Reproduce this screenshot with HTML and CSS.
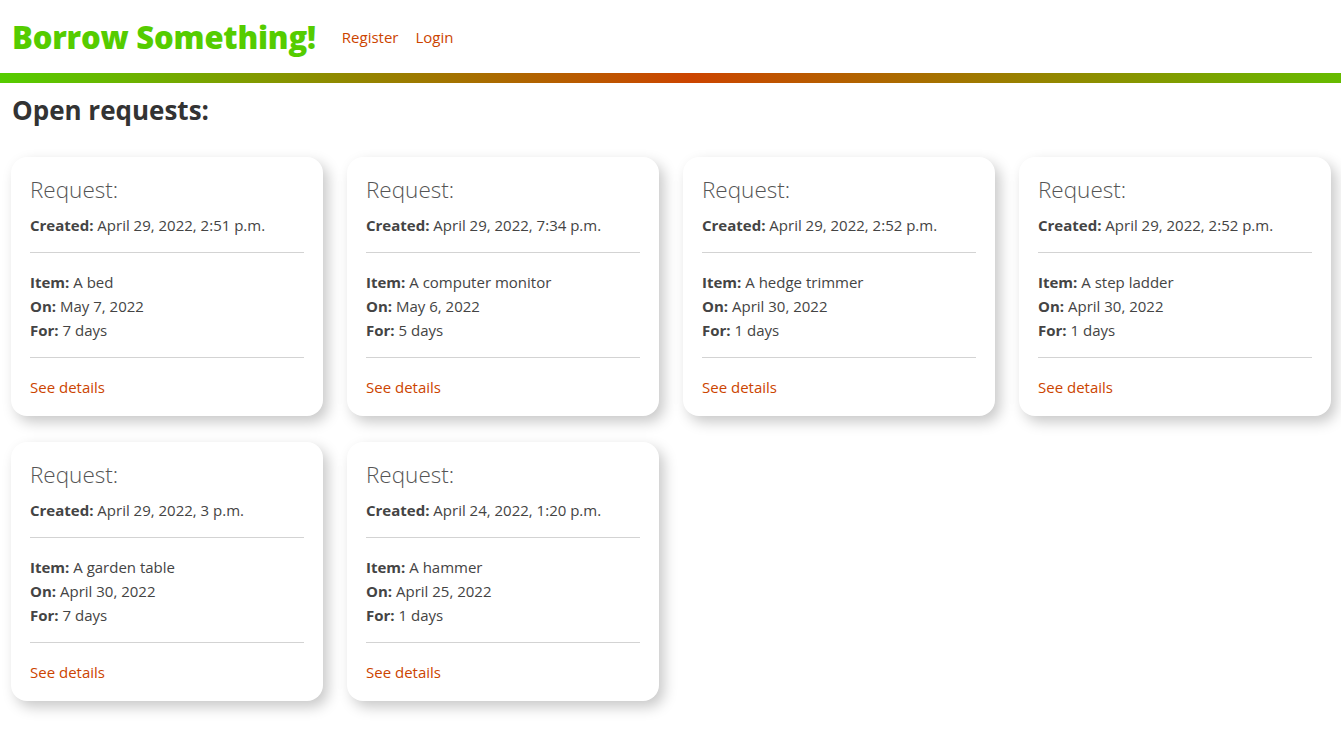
FILE: index.html
```html
<!DOCTYPE html>
<html>
<head>
<meta charset="utf-8">
<link rel="stylesheet" href="styles.css">
</head>
<body>
<header class="site-header">
  <h1 class="brand">Borrow Something!</h1>
  <nav class="nav">
    <a href="#">Register</a>
    <a href="#">Login</a>
  </nav>
</header>
<div class="rule"></div>
<main class="main">
  <h2 class="page-title">Open requests:</h2>
  <div class="grid">
    <div class="card">
      <h3 class="card-title">Request:</h3>
      <p class="line"><b>Created:</b> April 29, 2022, 2:51 p.m.</p>
      <hr class="sep">
      <p class="line"><b>Item:</b> A bed</p>
      <p class="line"><b>On:</b> May 7, 2022</p>
      <p class="line"><b>For:</b> 7 days</p>
      <hr class="sep">
      <a class="more" href="#">See details</a>
    </div>
    <div class="card">
      <h3 class="card-title">Request:</h3>
      <p class="line"><b>Created:</b> April 29, 2022, 7:34 p.m.</p>
      <hr class="sep">
      <p class="line"><b>Item:</b> A computer monitor</p>
      <p class="line"><b>On:</b> May 6, 2022</p>
      <p class="line"><b>For:</b> 5 days</p>
      <hr class="sep">
      <a class="more" href="#">See details</a>
    </div>
    <div class="card">
      <h3 class="card-title">Request:</h3>
      <p class="line"><b>Created:</b> April 29, 2022, 2:52 p.m.</p>
      <hr class="sep">
      <p class="line"><b>Item:</b> A hedge trimmer</p>
      <p class="line"><b>On:</b> April 30, 2022</p>
      <p class="line"><b>For:</b> 1 days</p>
      <hr class="sep">
      <a class="more" href="#">See details</a>
    </div>
    <div class="card">
      <h3 class="card-title">Request:</h3>
      <p class="line"><b>Created:</b> April 29, 2022, 2:52 p.m.</p>
      <hr class="sep">
      <p class="line"><b>Item:</b> A step ladder</p>
      <p class="line"><b>On:</b> April 30, 2022</p>
      <p class="line"><b>For:</b> 1 days</p>
      <hr class="sep">
      <a class="more" href="#">See details</a>
    </div>
    <div class="card">
      <h3 class="card-title">Request:</h3>
      <p class="line"><b>Created:</b> April 29, 2022, 3 p.m.</p>
      <hr class="sep">
      <p class="line"><b>Item:</b> A garden table</p>
      <p class="line"><b>On:</b> April 30, 2022</p>
      <p class="line"><b>For:</b> 7 days</p>
      <hr class="sep">
      <a class="more" href="#">See details</a>
    </div>
    <div class="card">
      <h3 class="card-title">Request:</h3>
      <p class="line"><b>Created:</b> April 24, 2022, 1:20 p.m.</p>
      <hr class="sep">
      <p class="line"><b>Item:</b> A hammer</p>
      <p class="line"><b>On:</b> April 25, 2022</p>
      <p class="line"><b>For:</b> 1 days</p>
      <hr class="sep">
      <a class="more" href="#">See details</a>
    </div>
  </div>
</main>
</body>
</html>
```

FILE: styles.css
```css
html, body {
  margin: 0;
  padding: 0;
  background: #fff;
}
body {
  font-family: "Open Sans", "Noto Sans", sans-serif;
  color: #444;
}
.site-header {
  height: 73px;
  display: flex;
  align-items: center;
  padding-left: 12px;
  gap: 26px;
}
.brand {
  margin: 0;
  font-size: 31px;
  font-weight: 800;
  color: #55cc00;
  line-height: 40px;
  letter-spacing: -0.2px;
}
.nav {
  display: flex;
  gap: 17px;
}
.nav a {
  color: #cc4400;
  text-decoration: none;
  font-size: 15px;
}
.rule {
  height: 10px;
  background: linear-gradient(to right, #55cc00 0%, #cc4400 51.5%, #66bb00 100%);
}
.main {
  padding: 10px 11px 20px;
}
.page-title {
  margin: 0 0 0 1px;
  font-size: 26px;
  line-height: 34px;
  font-weight: 700;
  color: #333;
}
.grid {
  margin-top: 30px;
  display: grid;
  grid-template-columns: repeat(4, 312px);
  column-gap: 24px;
  row-gap: 26px;
}
.card {
  background: #fff;
  border-radius: 16px;
  box-shadow: 5px 6px 14px rgba(0, 0, 0, 0.22);
  padding: 17px 19px 17px;
  display: flex;
  flex-direction: column;
}
.card-title {
  margin: 0;
  font-size: 22.5px;
  font-weight: 300;
  line-height: 32px;
  color: #555;
}
.line {
  margin: 0;
  font-size: 15px;
  line-height: 24px;
}
.card-title + .line {
  margin-top: 7px;
}
.line b {
  font-weight: 700;
  color: #444;
}
.sep {
  border: 0;
  border-top: 1px solid #d3d3d3;
  margin: 15px 0 17px;
  height: 0;
}
.more {
  color: #cc4400;
  text-decoration: none;
  font-size: 15px;
  line-height: 24px;
}
```
